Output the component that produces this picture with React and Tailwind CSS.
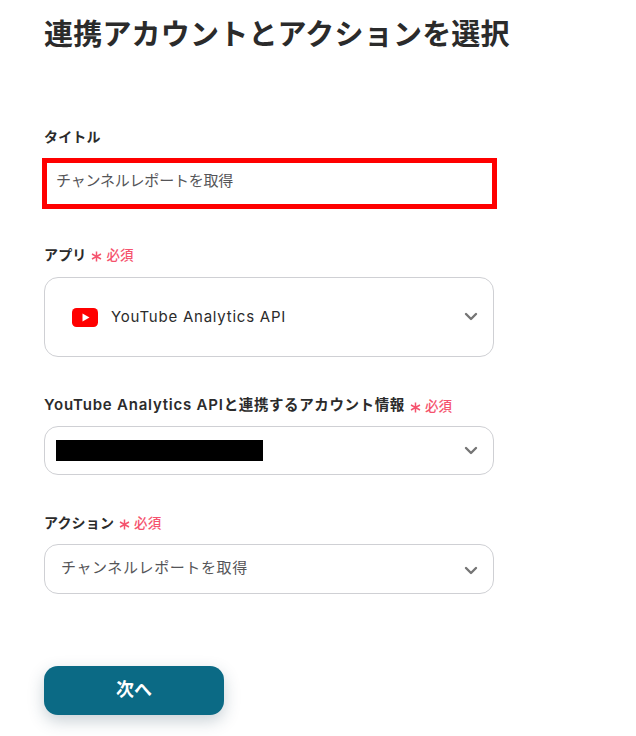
const font = { fontFamily: 'Inter, "Noto Sans CJK JP", sans-serif' };

function Chevron({ className = "" }) {
  return (
    <svg width="14" height="9" viewBox="0 0 14 9" fill="none" className={"shrink-0 " + className}>
      <path d="M2 2l5 5 5-5" stroke="#757575" strokeWidth="2.4" strokeLinecap="round" strokeLinejoin="round" />
    </svg>
  );
}

function Required() {
  return (
    <span className="flex items-center ml-[5px] text-[#f5536e]">
      <svg width="11" height="11" viewBox="0 0 11 11" className="mt-[5px] mr-[4px]">
        <path d="M5.5 0.5v10M1 3l9 5M10 3l-9 5" stroke="#f5536e" strokeWidth="1.5" fill="none" />
      </svg>
      <span className="text-[13.5px] font-medium leading-5 mt-[1px]">必須</span>
    </span>
  );
}

function Label({ children, required, className }) {
  return (
    <div className={"flex items-center h-5 whitespace-nowrap text-[14px] font-bold tracking-[0.15px] text-[#2b2b2b] " + className}>
      <span>{children}</span>
      {required && <Required />}
    </div>
  );
}

function SelectBox({ className, chevron, children }) {
  return (
    <div className={"flex items-center justify-between w-[450px] border border-[#cfd0d4] bg-white rounded-[14px] pr-[15px] " + className}>
      {children}
      <Chevron className={chevron} />
    </div>
  );
}

export default function App() {
  return (
    <div style={font} className="w-[636px] h-[736px] overflow-hidden bg-white pl-[44px] relative">
      <h1 className="text-[29px] tracking-[0.2px] leading-[40px] font-bold text-[#2b2b2b] pt-[15px] h-[54px] whitespace-nowrap">連携アカウントとアクションを選択</h1>

      <Label className="mt-[72px]">タイトル</Label>
      <div className="mt-[12px] -ml-[2px] w-[455px] h-[51px] border-[5px] border-[#ff0000] flex items-center pl-[9px] pb-[4px] text-[15px] text-[#555558] tracking-[-0.2px]">
        チャンネルレポートを取得
      </div>

      <Label required className="mt-[35px]">アプリ</Label>
      <SelectBox className="mt-[13px] h-[80px] pl-[27px]" chevron="-mt-[2px]">
        <div className="flex items-center">
          <svg width="26" height="19" viewBox="0 0 26 19">
            <rect x="0" y="0" width="26" height="19" rx="4.5" fill="#ff0000" />
            <path d="M10.5 5.5l7 4-7 4z" fill="#fff" />
          </svg>
          <span className="ml-[13px] text-[15px] tracking-[0.77px] text-[#2b2b2b]">YouTube Analytics API</span>
        </div>
      </SelectBox>

      <Label required className="mt-[38px]">
        <span className="text-[15px] font-semibold tracking-[0.78px]">YouTube Analytics API</span>
        <span className="text-[14.5px] font-semibold tracking-[0.6px]">と連携するアカウント情報</span>
      </Label>
      <SelectBox className="mt-[11px] h-[49px] pl-[11px]">
        <div className="w-[207px] h-[21px] bg-black" />
      </SelectBox>

      <Label required className="mt-[38px] -translate-y-[1px]">アクション</Label>
      <SelectBox className="mt-[11px] h-[50px] pl-[16px]" chevron="mt-[2px]">
        <span className="text-[15px] text-[#555558] tracking-[0.6px] pb-[1px]">チャンネルレポートを取得</span>
      </SelectBox>

      <button className="mt-[72px] flex items-center justify-center w-[180px] h-[49px] rounded-[14px] bg-[#0b6a85] text-white text-[18px] font-bold pb-[3px] shadow-[0_6px_16px_rgba(40,70,90,0.25)]">
        次へ
      </button>
    </div>
  );
}
